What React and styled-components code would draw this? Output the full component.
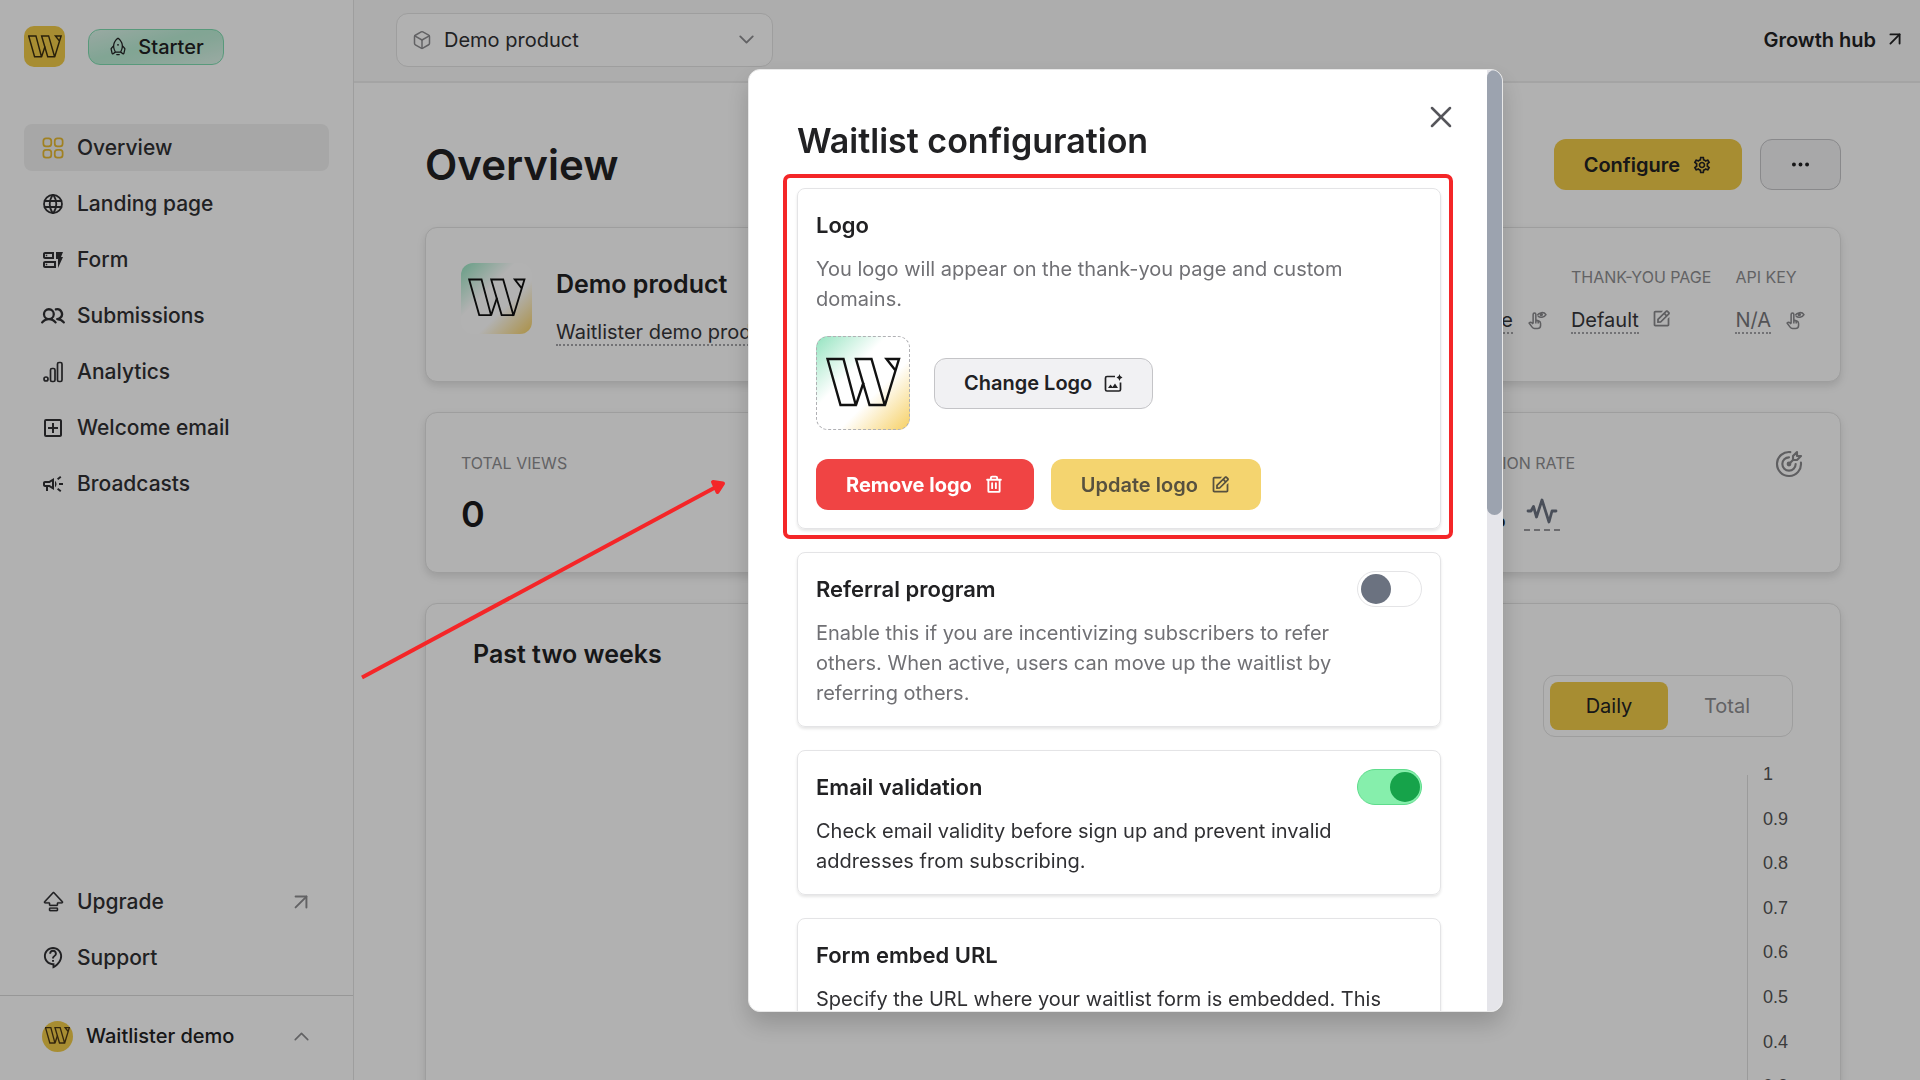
import React from "react";
import styled, { createGlobalStyle, css } from "styled-components";
import { MdOutlineDynamicForm, MdOutlineCampaign, MdOutlineAddBox, MdOutlineContactSupport, MdOutlineSettings } from "react-icons/md";
import { PiUsersBold, PiRocket, PiTrashBold } from "react-icons/pi";
import { BsCapslock, BsThreeDots } from "react-icons/bs";
import { BiEdit } from "react-icons/bi";
import { HiOutlineSquares2X2 } from "react-icons/hi2";
import { FiArrowUpRight, FiBox, FiChevronDown, FiChevronUp, FiX } from "react-icons/fi";
import { TbTargetArrow, TbWorld } from "react-icons/tb";

const GlobalStyle = createGlobalStyle`
  *, *::before, *::after { box-sizing: border-box; }
  body {
    margin: 0;
    background: #fefefe;
    color: #212123;
    font-family: Inter, "Liberation Sans", sans-serif;
    font-size: 20px;
    line-height: 24px;
  }
  h1, h2, h3, p, ul, dl, dd { margin: 0; padding: 0; }
  ul { list-style: none; }
  a { color: inherit; text-decoration: none; }
  button, select, input { font: inherit; color: inherit; }
  svg { display: block; flex: none; }
`;

const Page = styled.div`
  display: flex;
  height: 100vh;
  overflow: hidden;
`;

/* Sidebar */
const Sidebar = styled.aside`
  flex: none;
  width: 354px;
  display: flex;
  flex-direction: column;
  border-right: 1px solid #e2e2e2;
`;

const Brand = styled.div`
  display: flex;
  align-items: center;
  gap: 23px;
  padding: 26px 24px 57px;
`;

const LogoMark = styled.span`
  flex: none;
  display: flex;
  align-items: center;
  justify-content: center;
  width: ${(p) => p.$size}px;
  height: ${(p) => p.$size}px;
  border-radius: ${(p) => p.$radius};
  background: ${(p) => (p.$gradient ? "linear-gradient(135deg, #93e3bf 0%, #fff 38%, #fff 62%, #f6cf62 100%) border-box" : "#f0ca48")};
  border: ${(p) => (p.$dashed ? "1px dashed #b0b0b4" : "0")};
`;

const PlanBadge = styled.span`
  display: flex;
  align-items: center;
  justify-content: center;
  gap: 10px;
  width: 136px;
  height: 36px;
  border: 1px solid #7fdcb1;
  border-radius: 12px;
  background: linear-gradient(165deg, #dcf3e9 0%, #b9ecd4 45%, #bfedd7 60%, #def4ea 100%);
  font-weight: 500;
`;

const NavList = styled.ul`
  display: flex;
  flex-direction: column;
  gap: 9px;
  padding: 0 24px;
`;

const NavLink = styled.a`
  display: flex;
  align-items: center;
  gap: 10px;
  height: 47px;
  padding: 0 15px;
  border-radius: 8px;
  background: ${(p) => (p.$active ? "#f0f0f0" : "transparent")};
  font-size: 21px;
  font-weight: 500;
  color: #303033;
`;

const NavIcon = styled.span`
  width: 28px;
  display: flex;
  justify-content: center;
  color: ${(p) => (p.$active ? "#e6b932" : "#303033")};
`;

const NavTail = styled.span`
  display: flex;
  margin-left: auto;
  color: #8d8d90;
`;

const SidebarBottom = styled.div`
  margin-top: auto;
`;

const AccountButton = styled.button`
  display: flex;
  align-items: center;
  gap: 13px;
  width: 100%;
  height: 85px;
  margin-top: 14px;
  padding: 0 39px 4px 42px;
  border: 0;
  border-top: 1px solid #d8d8d8;
  background: none;
  font-weight: 500;
`;

/* Main column */
const Column = styled.div`
  flex: 1;
  min-width: 0;
`;

const TopBar = styled.header`
  display: flex;
  align-items: center;
  justify-content: space-between;
  height: 83px;
  padding: 0 14px 2px 42px;
  border-bottom: 2px solid #ebebeb;
  background: #f8f8f8;
`;

const ProductPicker = styled.label`
  display: flex;
  align-items: center;
  gap: 12px;
  width: 377px;
  height: 54px;
  padding: 0 13px 0 15px;
  border: 1px solid #e2e2e2;
  border-radius: 12px;
  background: #fefefe;
  color: #8d8d90;
`;

const ProductSelect = styled.select`
  flex: 1;
  min-width: 0;
  appearance: none;
  border: 0;
  padding: 0;
  background: none;
  color: #303033;
`;

const HubLink = styled.a`
  display: flex;
  align-items: flex-start;
  gap: 8px;
  font-weight: 600;
`;

const Content = styled.main`
  display: flex;
  flex-direction: column;
  gap: 30px;
  padding: 56px 79px 0 71px;
`;

const TitleRow = styled.div`
  display: flex;
  align-items: center;
  gap: 18px;
  margin-bottom: 7px;
`;

const PageTitle = styled.h1`
  flex: 1;
  font-size: 42px;
  line-height: 50px;
  font-weight: 600;
`;

const Button = styled.button`
  display: inline-flex;
  align-items: center;
  justify-content: center;
  gap: 12px;
  height: 51px;
  padding: 0 29px;
  border: 1px solid transparent;
  border-radius: 12px;
  font-weight: 600;
  ${(p) => p.$tone === "primary" && css`background: #f0ca48;`}
  ${(p) => p.$tone === "muted" && css`background: #f1f1f3; border-color: #c4c4c7;`}
  ${(p) => p.$tone === "danger" && css`background: #f04444; color: #fff; font-weight: 700;`}
  &:disabled { background: #f4d46f; color: #57513f; }
`;

const Card = styled.section`
  border: 1px solid #e2e2e2;
  border-radius: 12px;
  background: #fefefe;
  box-shadow: 0 4px 8px rgba(0, 0, 0, 0.12);
`;

const ProductCard = styled(Card)`
  display: flex;
  align-items: flex-start;
  gap: 24px;
  min-height: 155px;
  padding: 35px;
`;

const ProductName = styled.h2`
  margin-bottom: 15px;
  font-size: 25px;
  line-height: 42px;
  font-weight: 600;
`;

const Dotted = styled.span`
  display: inline-block;
  border-bottom: 2px dotted #a4a4a8;
  color: ${(p) => (p.$soft ? "#77777b" : "#36363a")};
`;

const Facts = styled.dl`
  display: flex;
  gap: 24px;
  margin-left: auto;
`;

const Fact = styled.div`
  display: flex;
  flex-direction: column;
  gap: 17px;
`;

const FactValue = styled.dd`
  display: flex;
  align-items: flex-start;
  gap: 12px;
  color: #88888c;
`;

const SmallLabel = styled.dt`
  font-size: 16px;
  line-height: ${(p) => p.$line}px;
  color: #8d8d90;
`;

const Stats = styled.div`
  display: grid;
  grid-template-columns: repeat(3, 1fr);
  gap: 30px;
`;

const StatCard = styled(Card)`
  display: flex;
  justify-content: space-between;
  min-height: 161px;
  padding: 35px;
  color: #88888c;
`;

const StatBody = styled.dl`
  display: flex;
  flex-direction: column;
  gap: 15px;
`;

const StatValue = styled.dd`
  display: flex;
  gap: 17px;
  height: 42px;
  font-size: 36px;
  line-height: 42px;
  font-weight: 600;
  color: #1b1b1e;
`;

const Unit = styled.span`
  font-size: 25px;
`;

const Trend = styled.span`
  display: flex;
  align-items: center;
  height: 38px;
  border-bottom: 2px dashed #9a9a9e;
  color: #6b7280;
`;

const ChartCard = styled(Card)`
  flex: none;
  display: flex;
  flex-direction: column;
  padding: 32px 47px;
`;

const ChartTitle = styled.h2`
  font-size: 25px;
  line-height: 36px;
  font-weight: 600;
`;

const Segmented = styled.div`
  align-self: flex-end;
  display: grid;
  grid-template-columns: 1fr 1fr;
  width: 250px;
  margin-top: 3px;
  padding: 6px;
  border: 1px solid #e2e2e2;
  border-radius: 12px;
`;

const Segment = styled.button`
  height: 48px;
  border: 0;
  border-radius: 8px;
  background: ${(p) => (p["aria-pressed"] ? "#f0ca48" : "transparent")};
  color: ${(p) => (p["aria-pressed"] ? "#212123" : "#8d8d90")};
`;

const Axis = styled.div`
  align-self: flex-end;
  width: 46px;
  margin-top: 38px;
  padding-left: 15px;
  border-left: 1px solid #dedede;
`;

const AxisLabels = styled.ul`
  display: flex;
  flex-direction: column;
  justify-content: space-between;
  height: 466px;
  margin-top: -11px;
  font-family: "Liberation Sans", Arial, sans-serif;
  font-size: 18px;
  line-height: 20px;
  color: #555;
`;

/* Dialog */
const Overlay = styled.div`
  position: fixed;
  inset: 0;
  display: flex;
  align-items: stretch;
  justify-content: center;
  padding: 69px 0 68px 331px;
  background: rgba(0, 0, 0, 0.3);
`;

const Dialog = styled.div`
  position: relative;
  display: flex;
  width: 755px;
  border: 1px solid #e8e8e8;
  border-radius: 12px;
  background: #fff;
  overflow: hidden;
  box-shadow: 0 12px 24px rgba(0, 0, 0, 0.18);
`;

const DialogBody = styled.div`
  flex: 1;
  min-width: 0;
  display: flex;
  flex-direction: column;
  gap: 23px;
  padding: 50px 46px 0 48px;
  overflow: hidden;
`;

const DialogTitle = styled.h2`
  margin-bottom: 3px;
  font-size: 34px;
  line-height: 42px;
  font-weight: 600;
`;

const CloseButton = styled.button`
  position: absolute;
  top: 29px;
  right: 43px;
  padding: 0;
  border: 0;
  background: none;
  color: #55555a;
`;

const ScrollTrack = styled.div`
  width: 15px;
  background: #e5e5ea;
`;

const ScrollThumb = styled.div`
  height: 445px;
  border-radius: 8px;
  background: #9ca3af;
`;

const Highlight = styled.div`
  position: relative;
  flex: none;
  &::after {
    content: "";
    position: absolute;
    inset: -14px -12px -10px -14px;
    border: 4px solid #f42628;
    border-radius: 7px;
    pointer-events: none;
  }
`;

const Setting = styled.section`
  flex: none;
  display: flex;
  align-items: flex-start;
  gap: 20px;
  padding: 18px;
  border: 1px solid #e4e4e6;
  border-radius: 8px;
  box-shadow: 0 2px 3px rgba(0, 0, 0, 0.1);
`;

const SettingText = styled.div`
  flex: 1;
  min-width: 0;
`;

const SettingTitle = styled.h3`
  margin-bottom: 11px;
  font-size: 22px;
  line-height: 36px;
  font-weight: 600;
`;

const SettingCopy = styled.p`
  line-height: 30px;
  color: ${(p) => (p.$soft ? "#707074" : "#303033")};
`;

const LogoRow = styled.div`
  display: flex;
  align-items: center;
  gap: 24px;
  margin: 22px 0 29px;
`;

const ButtonRow = styled.div`
  display: flex;
  gap: 17px;
`;

const Switch = styled.input`
  appearance: none;
  flex: none;
  display: flex;
  align-items: center;
  width: 65px;
  height: 36px;
  margin: 0;
  padding: 0 3px;
  border: 1px solid #e4e4e6;
  border-radius: 18px;
  background: #fff;
  &::before {
    content: "";
    width: 30px;
    height: 30px;
    border-radius: 50%;
    background: #6b7280;
  }
  &:checked { justify-content: flex-end; padding: 0 1px; border-color: #5fdc8c; background: #86efac; }
  &:checked::before { background: #16a34a; }
`;

const Arrow = styled.svg`
  position: fixed;
  left: 360px;
  top: 476px;
  pointer-events: none;
`;

const WGlyph = ({ width, stroke = 2.4, color = "#111" }) => (
  <svg width={width} height={(width * 52) / 75} viewBox="10 21.5 75 52" fill="none" stroke={color} strokeWidth={stroke}>
    <path d="M40 70.5 27.5 23.5h-16L24.5 69.5H40l7.5-22.5" />
    <path d="M69 70.5 55.5 23.5H40L53.5 69.5H69L83 23.5H70.5L79.5 35" />
  </svg>
);

const BarsIcon = () => (
  <svg width="20" height="22" viewBox="0 0 20 22" fill="none" stroke="currentColor" strokeWidth="1.7">
    <circle cx="3" cy="18" r="2" />
    <rect x="7.5" y="7.5" width="4.5" height="13" rx="1.5" />
    <rect x="14.5" y="1.5" width="4.5" height="19" rx="1.5" />
  </svg>
);

const RevealIcon = () => (
  <svg width="22" height="24" viewBox="-9 -7 65 70" fill="none" stroke="currentColor" strokeWidth="4.5" strokeLinejoin="round">
    <path d="M27 14c5-9 20-11 26-2-5 9-18 10-24 4" />
    <circle cx="39" cy="12" r="3" fill="currentColor" />
    <path d="M15 38V12q0-5 4-5t4 5v16l9 3q5 2 5 7v6q0 9-9 9h-9q-4 0-7-4L3 37q4-4 8-1l4 4M23 28v10M30 31v7" />
  </svg>
);

const AddImageIcon = () => (
  <svg width="19" height="20" viewBox="0 0 19 20" fill="none" stroke="currentColor" strokeWidth="1.7">
    <path d="M11 3.500H3q-1.500 0-1.500 1.500v11.500q0 1.500 1.500 1.500h12q1.500 0 1.500-1.500V9.500" />
    <path d="M4 15l2.500-3.500 2 2.500 2.500-3.500 3 4.500z" fill="currentColor" stroke="none" />
    <path d="M15.500 1q.4 3 3 3.500-2.600.5-3 3.500-.4-3-3-3.500 2.600-.5 3-3.500z" fill="currentColor" stroke="none" />
  </svg>
);

const PulseIcon = () => (
  <svg width="36" height="28" viewBox="0 0 36 28" fill="none" stroke="currentColor" strokeWidth="2.8" strokeLinejoin="round" strokeLinecap="round">
    <path d="M4 14h3l2.500-4.500L12.500 20 18 3l7 22 3-11h4" />
  </svg>
);

const navItems = [
  { label: "Overview", icon: <HiOutlineSquares2X2 size={28} />, active: true },
  { label: "Landing page", icon: <TbWorld size={24} strokeWidth={1.8} /> },
  { label: "Form", icon: <MdOutlineDynamicForm size={24} /> },
  { label: "Submissions", icon: <PiUsersBold size={24} /> },
  { label: "Analytics", icon: <BarsIcon /> },
  { label: "Welcome email", icon: <MdOutlineAddBox size={24} /> },
  { label: "Broadcasts", icon: <MdOutlineCampaign size={24} /> },
];

const helpItems = [
  { label: "Upgrade", icon: <BsCapslock size={21} strokeWidth={0.2} />, tail: <FiArrowUpRight size={26} strokeWidth={1.8} /> },
  { label: "Support", icon: <MdOutlineContactSupport size={23} /> },
];

const ticks = ["1", "0.9", "0.8", "0.7", "0.6", "0.5", "0.4", "0.3", "0.2", "0.1", "0"];

const NavItems = ({ items }) => (
  <NavList>
    {items.map(({ label, icon, active, tail }) => (
      <li key={label}>
        <NavLink href="#" $active={active} aria-current={active ? "page" : undefined}>
          <NavIcon $active={active}>{icon}</NavIcon>
          {label}
          {tail && <NavTail>{tail}</NavTail>}
        </NavLink>
      </li>
    ))}
  </NavList>
);

const FactItem = ({ label, value, soft, icon }) => (
  <Fact>
    <SmallLabel $line={28}>{label}</SmallLabel>
    <FactValue>
      <Dotted $soft={soft}>{value}</Dotted>
      {icon}
    </FactValue>
  </Fact>
);

const Stat = ({ label, value, unit, trend, icon }) => (
  <StatCard>
    <StatBody>
      <SmallLabel $line={30}>{label}</SmallLabel>
      <StatValue>
        <span>{value}{unit && <Unit>{unit}</Unit>}</span>
        {trend && <Trend><PulseIcon /></Trend>}
      </StatValue>
    </StatBody>
    {icon}
  </StatCard>
);

const ToggleSetting = ({ id, title, soft, on, children }) => (
  <Setting>
    <SettingText>
      <SettingTitle><label htmlFor={id}>{title}</label></SettingTitle>
      <SettingCopy $soft={soft}>{children}</SettingCopy>
    </SettingText>
    <Switch id={id} type="checkbox" role="switch" defaultChecked={on} />
  </Setting>
);

export default function App() {
  return (
    <>
      <GlobalStyle />
      <Page>
        <Sidebar>
          <Brand>
            <LogoMark $size={41} $radius="10px"><WGlyph width={34} stroke={3.2} color="#3a2f10" /></LogoMark>
            <PlanBadge><PiRocket size={20} />Starter</PlanBadge>
          </Brand>
          <nav><NavItems items={navItems} /></nav>
          <SidebarBottom>
            <NavItems items={helpItems} />
            <AccountButton type="button">
              <LogoMark $size={31} $radius="50%"><WGlyph width={25} stroke={4} color="#4a3714" /></LogoMark>
              Waitlister demo
              <NavTail><FiChevronUp size={25} strokeWidth={1.6} /></NavTail>
            </AccountButton>
          </SidebarBottom>
        </Sidebar>

        <Column>
          <TopBar>
            <ProductPicker>
              <FiBox size={20} strokeWidth={1.8} />
              <ProductSelect aria-label="Product" defaultValue="demo">
                <option value="demo">Demo product</option>
              </ProductSelect>
              <FiChevronDown size={25} strokeWidth={1.8} />
            </ProductPicker>
            <HubLink href="#">Growth hub <FiArrowUpRight size={22} /></HubLink>
          </TopBar>

          <Content>
            <TitleRow>
              <PageTitle>Overview</PageTitle>
              <Button type="button" $tone="primary">Configure <MdOutlineSettings size={20} /></Button>
              <Button type="button" $tone="muted" aria-label="More actions"><BsThreeDots size={21} /></Button>
            </TitleRow>

            <ProductCard>
              <LogoMark $size={71} $radius="12px" $gradient><WGlyph width={58} /></LogoMark>
              <div>
                <ProductName>Demo product</ProductName>
                <Dotted>Waitlister demo product</Dotted>
              </div>
              <Facts>
                <FactItem label="DOMAIN" value="Add one" icon={<RevealIcon />} />
                <FactItem label="THANK-YOU PAGE" value="Default" icon={<BiEdit size={21} />} />
                <FactItem label="API KEY" value="N/A" soft icon={<RevealIcon />} />
              </Facts>
            </ProductCard>

            <Stats>
              <Stat label="TOTAL VIEWS" value="0" />
              <Stat label="SUBMISSIONS" value="0" />
              <Stat label="CONVERSION RATE" value="0.0" unit="%" trend icon={<TbTargetArrow size={32} strokeWidth={1.6} />} />
            </Stats>

            <ChartCard>
              <ChartTitle>Past two weeks</ChartTitle>
              <Segmented role="group" aria-label="Chart mode">
                <Segment type="button" aria-pressed={true}>Daily</Segment>
                <Segment type="button" aria-pressed={false}>Total</Segment>
              </Segmented>
              <Axis>
                <AxisLabels>{ticks.map((t) => <li key={t}>{t}</li>)}</AxisLabels>
              </Axis>
            </ChartCard>
          </Content>
        </Column>
      </Page>

      <Overlay>
        <Dialog role="dialog" aria-modal="true" aria-labelledby="dialog-title">
          <DialogBody>
            <DialogTitle id="dialog-title">Waitlist configuration</DialogTitle>

            <Highlight>
              <Setting>
                <SettingText>
                  <SettingTitle>Logo</SettingTitle>
                  <SettingCopy $soft>You logo will appear on the thank-you page and custom domains.</SettingCopy>
                  <LogoRow>
                    <LogoMark $size={94} $radius="12px" $gradient $dashed><WGlyph width={75} /></LogoMark>
                    <Button type="button" $tone="muted">Change Logo <AddImageIcon /></Button>
                  </LogoRow>
                  <ButtonRow>
                    <Button type="button" $tone="danger">Remove logo <PiTrashBold size={20} /></Button>
                    <Button type="button" $tone="primary" disabled>Update logo <BiEdit size={21} /></Button>
                  </ButtonRow>
                </SettingText>
              </Setting>
            </Highlight>

            <ToggleSetting id="referral" title="Referral program" soft>
              Enable this if you are incentivizing subscribers to refer others. When active, users can move up the waitlist by referring others.
            </ToggleSetting>

            <ToggleSetting id="validation" title="Email validation" on>
              Check email validity before sign up and prevent invalid addresses from subscribing.
            </ToggleSetting>

            <Setting>
              <SettingText>
                <SettingTitle>Form embed URL</SettingTitle>
                <SettingCopy>Specify the URL where your waitlist form is embedded. This ensures that referral links work.</SettingCopy>
              </SettingText>
            </Setting>
          </DialogBody>
          <ScrollTrack><ScrollThumb /></ScrollTrack>
          <CloseButton type="button" aria-label="Close"><FiX size={36} strokeWidth={1.7} /></CloseButton>
        </Dialog>
      </Overlay>

      <Arrow width="370" height="206" viewBox="0 0 370 206" fill="none" stroke="#f42628" strokeWidth="4" strokeLinejoin="round" aria-hidden="true">
        <path d="M2 201.500 356 11" />
        <path d="M353 6l10 1.500-5.500 8.500z" fill="#f42628" />
      </Arrow>
    </>
  );
}
